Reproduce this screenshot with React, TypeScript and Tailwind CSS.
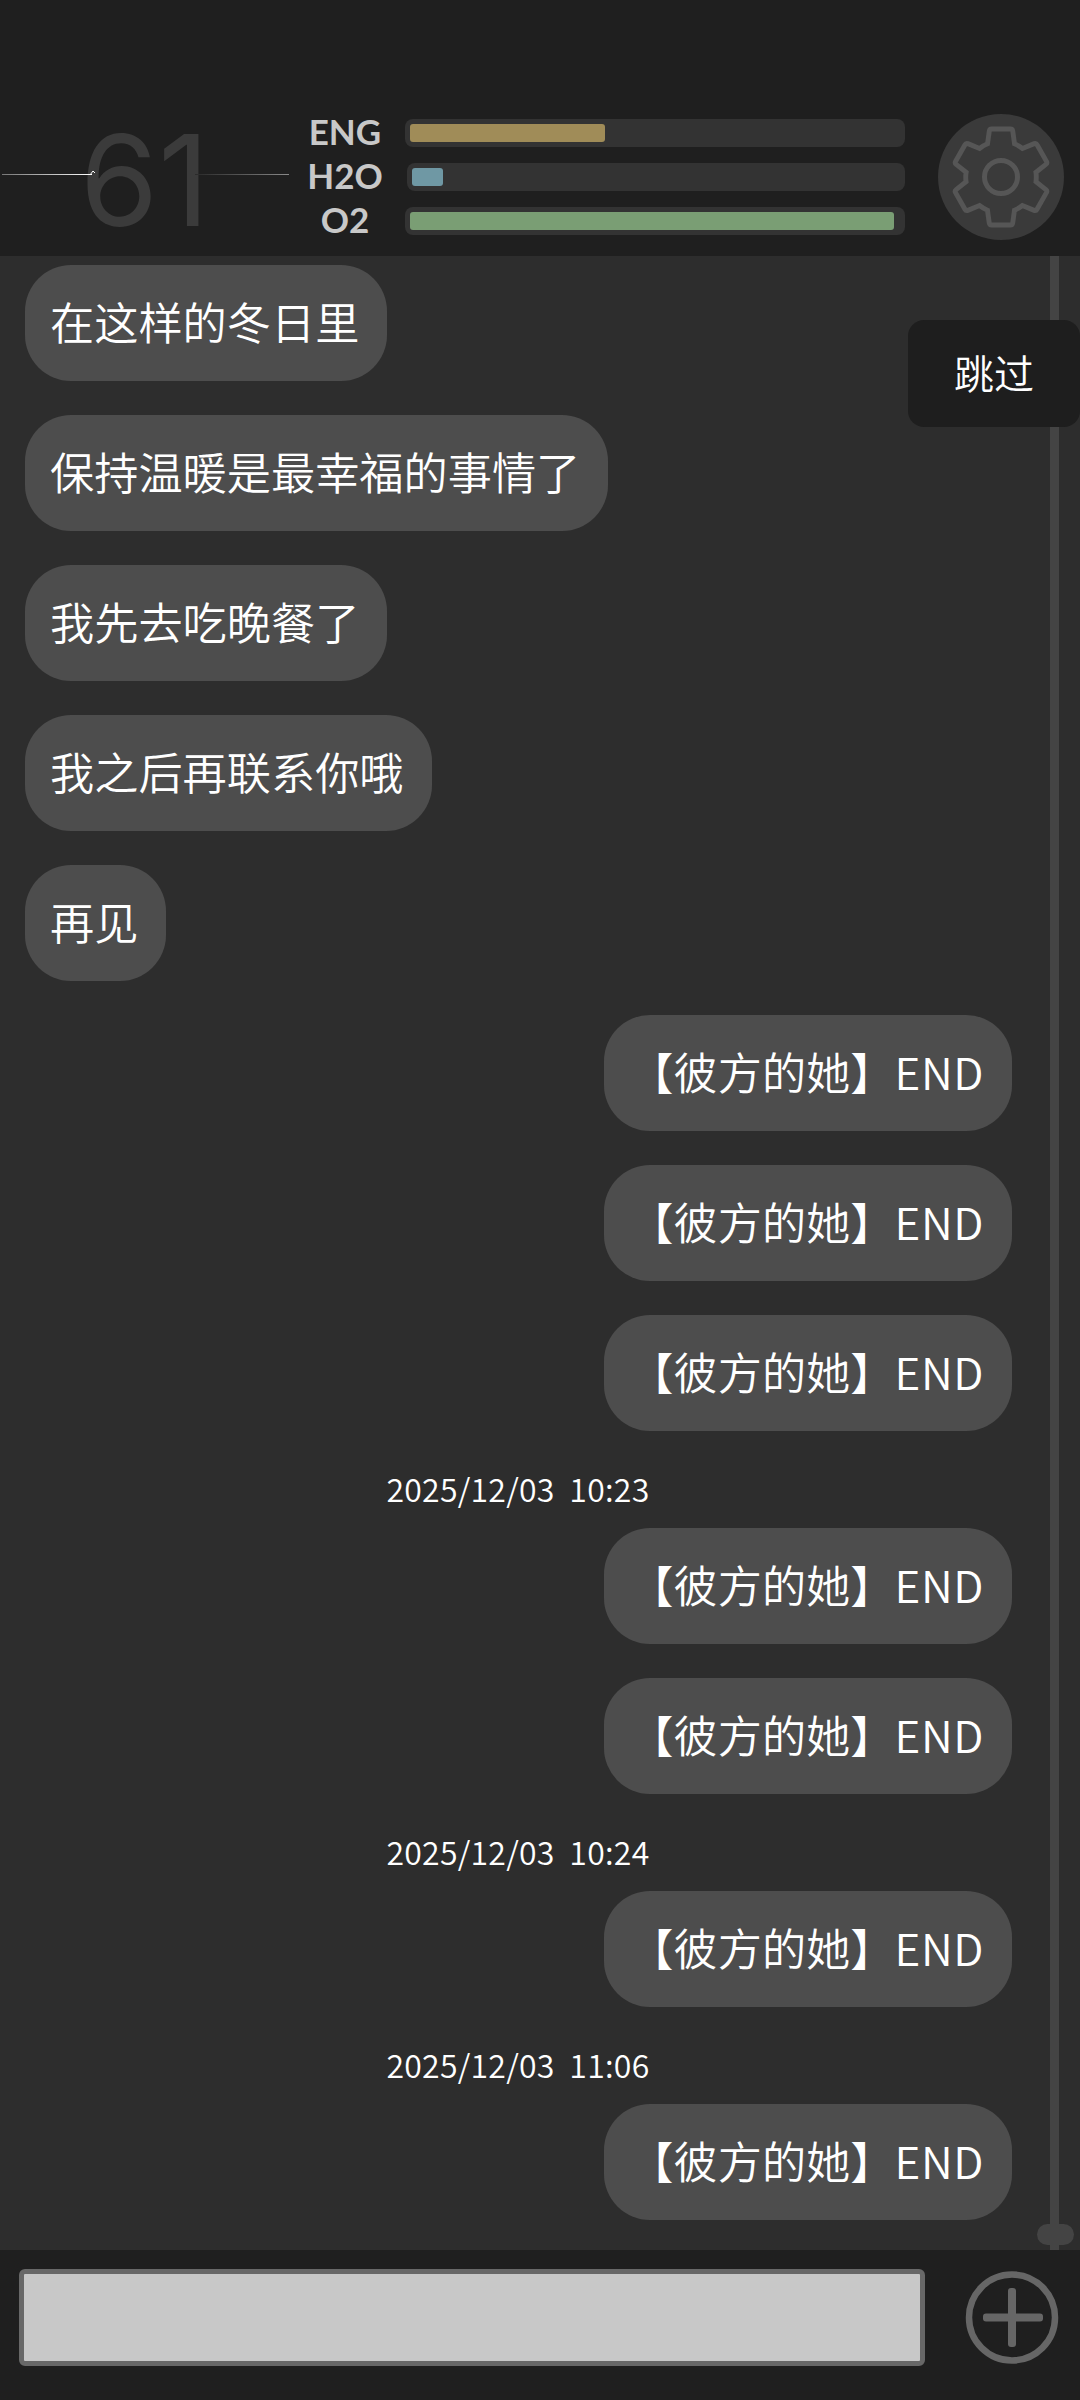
const CJK = "font-['Noto_Sans_CJK_SC','Noto_Sans',sans-serif]";

function Bubble({ text, latin, right }: { text: string; latin?: string; right?: boolean }) {
  return (
    <div className={right ? "flex justify-end pr-[24px]" : "flex justify-start pl-[25px]"}>
      <div className="flex h-[116px] items-center rounded-[46px] bg-[#4d4d4d] pr-[28px] pb-[3px] pl-[25px] text-[44.2px] leading-none font-[350] whitespace-nowrap text-white">
        {text}
        {latin && <span className="tracking-[0.6px]">{latin}</span>}
      </div>
    </div>
  );
}

function Stamp({ text }: { text: string }) {
  return (
    <div className="-my-[34px] flex h-[97px] items-center justify-center pt-[16px] text-[32px] leading-none font-[350] tracking-[0.25px] whitespace-pre text-white">
      {text}
    </div>
  );
}

function Bar({ fill, color, offset }: { fill: number; color: string; offset?: boolean }) {
  return (
    <div className={offset ? "ml-[2px] h-[28px] rounded-[8px] bg-[#333333] p-[5px]" : "h-[28px] rounded-[8px] bg-[#333333] p-[5px]"}>
      <div className="h-[18px] rounded-[3px]" style={{ width: fill, backgroundColor: color }} />
    </div>
  );
}

const HER = "【彼方的她】";

export default function App() {
  return (
    <div className={`flex h-[2400px] w-[1080px] flex-col overflow-hidden bg-[#2d2d2d] ${CJK}`}>
      <header className="relative flex h-[256px] shrink-0 items-start bg-[#1f1f1f] pt-[114px]">
        <div className="relative flex h-[120px] w-[290px] shrink-0 justify-start pt-[6px] pl-[80px]">
          <span className="font-['Inter',sans-serif] text-[126px] leading-[120px] font-normal text-[#3b3b3b]">61</span>
          <div className="absolute top-[60px] left-[2px] h-[1px] w-[90px] bg-gradient-to-r from-[#777777] to-white" />
          <div className="absolute top-[60px] left-[195px] h-[1px] w-[94px] bg-gradient-to-r from-[#2a2a2a] to-[#8a8a8a]" />
          <svg className="absolute top-[55px] left-[90px]" width="6" height="7" viewBox="0 0 6 7">
            <path d="M0 6 L3 2 L5 4" fill="none" stroke="#ffffff" strokeWidth="1" />
          </svg>
        </div>
        <div className="flex w-[110px] shrink-0 flex-col gap-[16px] pt-[3px] text-center font-['Lato',sans-serif] text-[35px] leading-[28px] font-bold text-[#c8c8c8]">
          <div>ENG</div>
          <div>H2O</div>
          <div>O2</div>
        </div>
        <div className="ml-[5px] flex w-[500px] shrink-0 flex-col gap-[16px] pt-[5px]">
          <Bar fill={195} color="#a08c58" />
          <Bar fill={31} color="#6f98a4" offset />
          <Bar fill={484} color="#7a9e74" />
        </div>
        <div className="ml-[33px] flex h-[126px] w-[126px] shrink-0 items-center justify-center rounded-full bg-[#3a3a3a]">
          <svg width="110" height="110" viewBox="0 0 110 110">
            <g transform="translate(55 55) scale(4.9 5) translate(-12 -12)">
              <path
                fill="none"
                stroke="#565656"
                strokeWidth="1"
                d="M19.14 12.94c.04-.3.06-.61.06-.94 0-.32-.02-.64-.07-.94l2.03-1.58c.18-.14.23-.41.12-.61l-1.92-3.32c-.12-.22-.37-.29-.59-.22l-2.39.96c-.5-.38-1.03-.7-1.62-.94l-.36-2.54c-.04-.24-.24-.41-.48-.41h-3.84c-.24 0-.43.17-.47.41l-.36 2.54c-.59.24-1.13.57-1.62.94l-2.39-.96c-.22-.08-.47 0-.59.22L2.74 8.87c-.12.21-.08.47.12.61l2.03 1.58c-.05.3-.09.63-.09.94s.02.64.07.94l-2.03 1.58c-.18.14-.23.41-.12.61l1.92 3.32c.12.22.37.29.59.22l2.39-.96c.5.38 1.03.7 1.62.94l.36 2.54c.05.24.24.41.48.41h3.84c.24 0 .44-.17.47-.41l.36-2.54c.59-.24 1.13-.56 1.62-.94l2.39.96c.22.08.47 0 .59-.22l1.92-3.32c.12-.22.07-.47-.12-.61l-2.01-1.58z"
              />
            </g>
            <circle cx="55" cy="55" r="16.5" fill="none" stroke="#565656" strokeWidth="5" />
          </svg>
        </div>
      </header>

      <main className="relative min-h-0 flex-1 overflow-hidden">
        <div className="flex w-[1036px] flex-col gap-[34px] pt-[9px]">
          <Bubble text="在这样的冬日里" />
          <Bubble text="保持温暖是最幸福的事情了" />
          <Bubble text="我先去吃晚餐了" />
          <Bubble text="我之后再联系你哦" />
          <Bubble text="再见" />
          <Bubble right text={HER} latin="END" />
          <Bubble right text={HER} latin="END" />
          <Bubble right text={HER} latin="END" />
          <Stamp text="2025/12/03  10:23" />
          <Bubble right text={HER} latin="END" />
          <Bubble right text={HER} latin="END" />
          <Stamp text="2025/12/03  10:24" />
          <Bubble right text={HER} latin="END" />
          <Stamp text="2025/12/03  11:06" />
          <Bubble right text={HER} latin="END" />
        </div>
        <div className="absolute top-0 bottom-0 left-[1050px] w-[9px] bg-[#444444]" />
        <div className="absolute bottom-[5px] left-[1037px] h-[21px] w-[37px] rounded-full bg-[#444444]" />
        <div className="absolute top-[64px] right-0 flex h-[107px] w-[172px] items-center justify-center rounded-[16px] bg-[#1e1e1e] pb-[3px] text-[40px] leading-none font-[350] text-white">
          跳过
        </div>
      </main>

      <footer className="flex h-[150px] shrink-0 items-start bg-[#1f1f1f] pt-[19px] pl-[19px]">
        <div className="h-[97px] w-[906px] rounded-[6px] border-[5px] border-[#686868] bg-[#c8c8c8]" />
        <svg className="mt-[2px] ml-[40px]" width="94" height="93" viewBox="0 0 94 93">
          <circle cx="47" cy="46.5" r="43" fill="none" stroke="#666666" strokeWidth="6.5" />
          <rect x="18" y="42.5" width="60" height="8" rx="3" fill="#666666" />
          <rect x="43" y="17" width="8" height="59" rx="3" fill="#666666" />
        </svg>
      </footer>
    </div>
  );
}
